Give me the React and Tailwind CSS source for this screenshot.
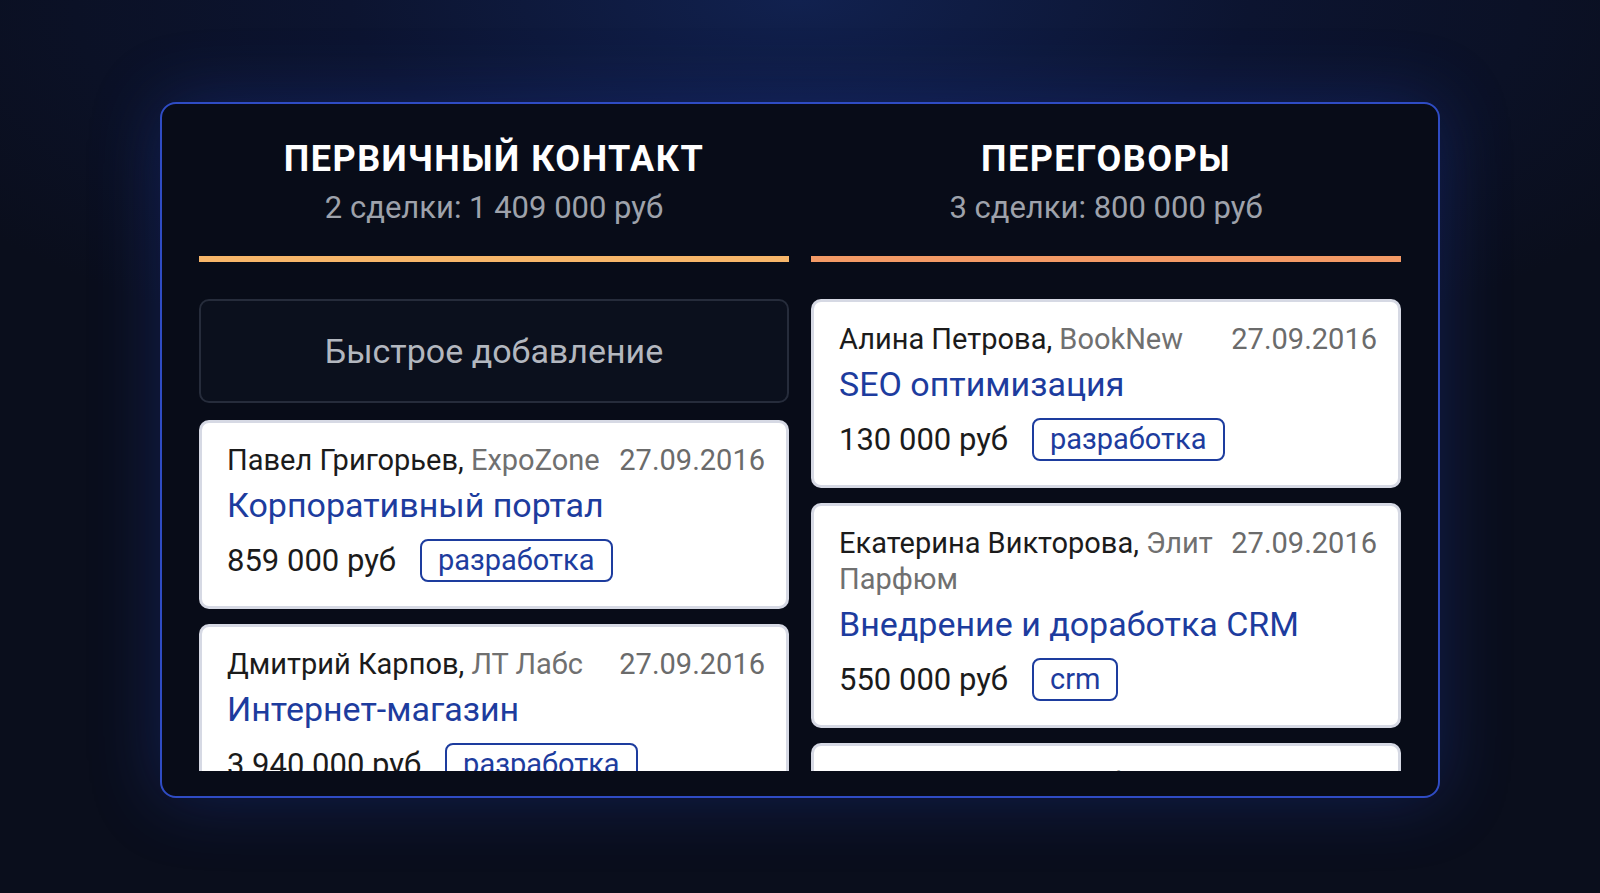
const leftDeals = [
  {
    name: "Павел Григорьев,",
    company: "ExpoZone",
    date: "27.09.2016",
    title: "Корпоративный портал",
    price: "859 000 руб",
    tag: "разработка",
  },
  {
    name: "Дмитрий Карпов,",
    company: "ЛТ Лабс",
    date: "27.09.2016",
    title: "Интернет-магазин",
    price: "3 940 000 руб",
    tag: "разработка",
  },
];

const rightDeals = [
  {
    name: "Алина Петрова,",
    company: "BookNew",
    date: "27.09.2016",
    title: "SEO оптимизация",
    price: "130 000 руб",
    tag: "разработка",
  },
  {
    name: "Екатерина Викторова,",
    company: "Элит Парфюм",
    date: "27.09.2016",
    title: "Внедрение и доработка CRM",
    price: "550 000 руб",
    tag: "crm",
  },
  {
    name: "Сергей Павлов,",
    company: "Альфа",
    date: "27.09.2016",
    title: "Мобильное приложение",
    price: "120 000 руб",
    tag: "разработка",
  },
];

function DealCard({ deal }) {
  return (
    <div className="shrink-0 rounded-[10px] border-[3px] border-[#d6d9e4] bg-white pl-[25px] pr-[21px] pt-[19px] pb-[24px]">
      <div className="flex items-start justify-between gap-[10px] text-[29px] leading-[36px]">
        <div className="min-w-0 flex-1 text-[#1b1b1b]">
          {deal.name} <span className="text-[#707070]">{deal.company}</span>
        </div>
        <div className="shrink-0 text-[#6b6b6b]">{deal.date}</div>
      </div>
      <div className="mt-[5px] text-[34px] leading-[44px] text-[#1d3c9e]">
        {deal.title}
      </div>
      <div className="mt-[12px] flex items-center gap-[24px]">
        <span className="text-[31px] leading-[42px] text-[#1b1b1b]">
          {deal.price}
        </span>
        <span className="flex h-[43px] items-center rounded-[8px] border-2 border-[#1d3c9e] px-[16px] text-[29px] text-[#1d3c9e]">
          {deal.tag}
        </span>
      </div>
    </div>
  );
}

function Column({ title, summary, lineColor, children }) {
  return (
    <div className="flex min-w-0 flex-col">
      <div className="text-center">
        <div className="text-[36px] font-bold leading-[46px] tracking-[1.5px] text-white">
          {title}
        </div>
        <div className="mt-[4px] text-[31px] leading-[44px] text-[#9ea2ab]">
          {summary}
        </div>
      </div>
      <div className={`mt-[26px] h-[6px] ${lineColor}`} />
      <div className="mt-[37px] flex h-[472px] flex-col gap-[15px] overflow-hidden">
        {children}
      </div>
    </div>
  );
}

export default function App() {
  return (
    <div
      className="h-[893px] w-full overflow-hidden bg-[#0a0e1c] bg-[radial-gradient(ellipse_1000px_400px_at_50%_0%,#11214f_0%,#0c1430_45%,#0a0e1c_100%)] pl-[160px] pt-[102px]"
      style={{ fontFamily: "Roboto, 'Noto Sans', sans-serif" }}
    >
      <div className="h-[696px] w-[1280px] rounded-[16px] border-2 border-[#2f4cc4] bg-[#080c18] px-[37px] pt-[32px] shadow-[0_0_70px_rgba(35,70,200,0.3)]">
        <div className="grid grid-cols-2 gap-[22px]">
          <Column
            title="ПЕРВИЧНЫЙ КОНТАКТ"
            summary="2 сделки: 1 409 000 руб"
            lineColor="bg-[#f7b66a]"
          >
            <div className="mb-[2px] flex h-[104px] shrink-0 items-center justify-center rounded-[10px] border-2 border-[#262c3b] bg-[#0b101d] text-[34px] text-[#b3b7bf]">
              Быстрое добавление
            </div>
            {leftDeals.map((d) => (
              <DealCard key={d.name} deal={d} />
            ))}
          </Column>
          <Column
            title="ПЕРЕГОВОРЫ"
            summary="3 сделки: 800 000 руб"
            lineColor="bg-[#f39a66]"
          >
            {rightDeals.map((d) => (
              <DealCard key={d.name} deal={d} />
            ))}
          </Column>
        </div>
      </div>
    </div>
  );
}
